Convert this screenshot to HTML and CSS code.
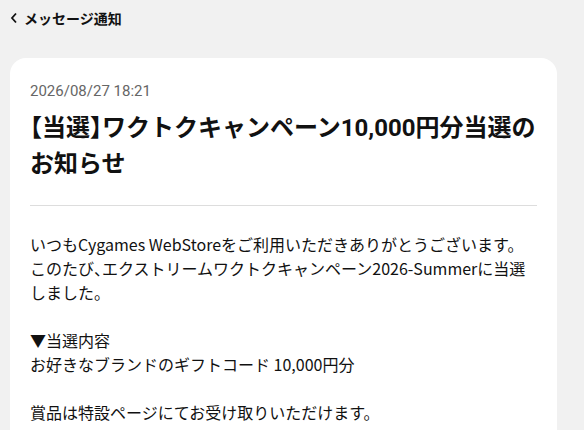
FILE: index.html
```html
<!DOCTYPE html>
<html lang="ja">
<head>
<meta charset="utf-8">
<link rel="stylesheet" href="styles.css">
</head>
<body>
<header class="topbar">
  <svg class="back" width="8" height="12" viewBox="0 0 8 12"><path d="M6 1.5 L2 6 L6 10.5" fill="none" stroke="#111" stroke-width="1.8"/></svg>
  <span class="topbar-title">メッセージ通知</span>
</header>
<main class="card">
  <div class="date">2026/08/27 18:21</div>
  <h1 class="title"><span class="half">【</span>当選<span class="half">】</span>ワクトクキャンペーン10,000円分当選のお知らせ</h1>
  <hr class="divider">
  <div class="body">
    <p>いつもCygames WebStoreをご利用いただきありがとうございます。<br>このたび<span class="half">、</span>エクストリームワクトクキャンペーン2026-Summerに当選しました。</p>
    <p><br>▼当選内容<br>お好きなブランドのギフトコード 10,000円分</p>
    <p><br>賞品は特設ページにてお受け取りいただけます。<br><a class="link" href="#">https://webstore.cygames.co.jp/extreme-wakutoku-campaign-2026/summer/receive</a></p>
  </div>
</main>
</body>
</html>
```
FILE: styles.css
```css
html, body {
  margin: 0;
  padding: 0;
  background: #f1f1f1;
  font-family: "Noto Sans CJK JP", "Noto Sans", sans-serif;
  color: #111;
}
.topbar {
  display: flex;
  align-items: center;
  gap: 6px;
  height: 36px;
  padding-left: 10px;
}
.back { display: block; }
.topbar-title {
  font-size: 14px;
  font-weight: 700;
  line-height: 36px;
}
.card {
  margin: 22px 27px 0 10px;
  background: #fff;
  border-radius: 16px;
  padding: 23px 20px 0 20px;
  height: 400px;
  overflow: hidden;
}
.date {
  font-family: Roboto, "Noto Sans CJK JP", sans-serif;
  font-size: 15px;
  line-height: 20px;
  color: #666;
}
.title {
  margin: 7px 0 0 0;
  font-family: Roboto, "Noto Sans CJK JP", sans-serif;
  font-size: 24px;
  font-weight: 700;
  line-height: 36px;
}
.half {
  font-family: "Noto Sans CJK JP", sans-serif;
  font-feature-settings: "halt";
}
.divider {
  margin: 23px 0 0 0;
  border: 0;
  border-top: 1px solid #ddd;
}
.body {
  margin-top: 26px;
  font-size: 16px;
  line-height: 24px;
}
.body p { margin: 0; }
.link {
  color: #2a4fd6;
  white-space: nowrap;
}
```
